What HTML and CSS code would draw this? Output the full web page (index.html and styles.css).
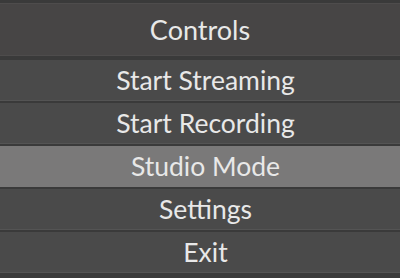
FILE: index.html
```html
<!DOCTYPE html>
<html lang="en">
<head>
    <meta charset="UTF-8">
    <title>Controls</title>
    <link rel="stylesheet" href="styles.css">
</head>
<body>
    <div class="dock">
        <!-- Dock title -->
        <div class="dock-title">Controls</div>

        <!-- Control buttons -->
        <div class="buttons">
            <button class="btn">Start Streaming</button>
            <button class="btn">Start Recording</button>
            <button class="btn btn-active">Studio Mode</button>
            <button class="btn">Settings</button>
            <button class="btn">Exit</button>
        </div>
    </div>
</body>
</html>
```

FILE: styles.css
```css
/* General Page Styling */
body {
    margin: 0;
    padding: 0;
    background-color: #3a3a3a;
    font-family: Lato, "Open Sans", sans-serif;
}

.dock {
    width: 400px;
    height: 278px;
    padding-top: 3px;
    box-sizing: border-box;
    display: flex;
    flex-direction: column;
    gap: 4px;
}

.dock-title {
    height: 53px;
    background-color: #474545;
    border-top: 1px solid #4e4c4c;
    border-bottom: 1px solid #4e4c4c;
    box-sizing: border-box;
    color: #e8e8e8;
    font-size: 27px;
    display: flex;
    align-items: center;
    justify-content: center;
}

/* Buttons */
.buttons {
    display: flex;
    flex-direction: column;
    gap: 2px;
}

.btn {
    height: 41px;
    margin: 0;
    padding: 0 0 0 11px;
    border: none;
    border-bottom: 1px solid #545454;
    background-color: #4a4a4a;
    color: #e8e8e8;
    font-family: inherit;
    font-size: 26.5px;
    cursor: pointer;
}

.btn-active {
    background-color: #7a7979;
    border-bottom-color: #7a7979;
}
```
